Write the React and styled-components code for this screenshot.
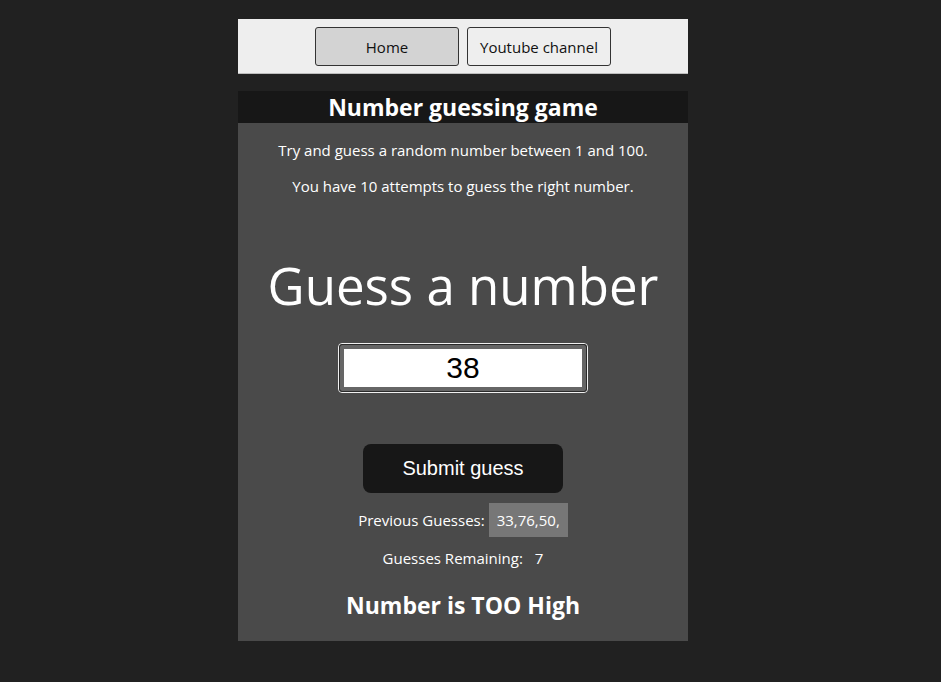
import React from 'react';
import styled, { createGlobalStyle } from 'styled-components';

const GlobalStyle = createGlobalStyle`
  body {
    margin: 0;
    background: #212121;
    font-family: "Open Sans", "Noto Sans", sans-serif;
  }
`;

function App() {
  return (
    <>
      <GlobalStyle />
      <Page>
        <Nav>
          <NavButton active>Home</NavButton>
          <NavButton>Youtube channel</NavButton>
        </Nav>

        <Game>
          <Title>Number guessing game</Title>
          <Info>Try and guess a random number between 1 and 100.</Info>
          <Info>You have 10 attempts to guess the right number.</Info>

          <BigLabel>Guess a number</BigLabel>
          <GuessField>
            <GuessInput type="text" defaultValue="38" />
          </GuessField>

          <SubmitButton>Submit guess</SubmitButton>

          <StatRow>
            Previous Guesses: <Chip>33,76,50,</Chip>
          </StatRow>
          <StatRow>
            Guesses Remaining: <Count>7</Count>
          </StatRow>

          <Result>Number is TOO High</Result>
        </Game>
      </Page>
    </>
  );
}

export default App;

// the reference was taken with a 15px scrollbar, so the column sits a little left of centre
const Page = styled.div`
  width: 450px;
  margin: 19px 0 0 calc((100% - 15px - 450px) / 2);
  display: flex;
  flex-direction: column;
  gap: 17px;
`;

const Nav = styled.nav`
  height: 54px;
  background: #eeeeee;
  border-bottom: 1px solid #bdbdbd;
  display: flex;
  justify-content: center;
  align-items: center;
  gap: 8px;
`;

const NavButton = styled.button`
  width: 144px;
  height: 39px;
  background: ${p => (p.active ? '#d3d3d3' : '#eeeeee')};
  border: 1px solid #333;
  border-radius: 3px;
  font-family: "Open Sans", "Noto Sans", sans-serif;
  font-size: 15px;
  color: #111;
  margin-top: 1px;
`;

const Game = styled.main`
  background: #4a4a4a;
  color: #fff;
  display: flex;
  flex-direction: column;
  align-items: center;
  padding-bottom: 21px;
`;

const Title = styled.h1`
  align-self: stretch;
  margin: 0;
  height: 32px;
  line-height: 33px;
  background: #171717;
  text-align: center;
  font-size: 23px;
  font-weight: 700;
`;

const Info = styled.p`
  margin: 17px 0 0;
  font-size: 15px;
  line-height: 20px;
  & + & {
    margin-top: 16px;
  }
`;

const BigLabel = styled.h2`
  margin: 57px 0 0;
  font-size: 51px;
  font-weight: 400;
  line-height: 64px;
`;

const GuessField = styled.div`
  margin-top: 26px;
  width: 250px;
  height: 50px;
  box-sizing: border-box;
  border: 1px solid #f0f0f0;
  border-radius: 4px;
  padding: 1px;
  display: flex;
`;

const GuessInput = styled.input`
  flex: 1;
  min-width: 0;
  border: 4px solid #666;
  outline: 1px solid #2a2a2a;
  border-radius: 2px;
  background: #fff;
  text-align: center;
  font-family: "Liberation Sans", Arial, sans-serif;
  font-size: 30px;
  color: #000;
  padding: 0;
`;

const SubmitButton = styled.button`
  margin-top: 51px;
  width: 200px;
  height: 49px;
  background: #171717;
  color: #fff;
  border: none;
  border-radius: 8px;
  font-family: "Liberation Sans", Arial, sans-serif;
  font-size: 20px;
`;

const StatRow = styled.div`
  margin-top: 10px;
  font-size: 15px;
  line-height: 34px;
  display: flex;
  align-items: center;
  gap: 4px;
  & + & {
    margin-top: 4px;
  }
`;

const Chip = styled.span`
  background: #777;
  padding: 0 8px;
  line-height: 34px;
`;

const Count = styled.span`
  padding-left: 8px;
`;

const Result = styled.h3`
  margin: 15px 0 0;
  font-size: 23px;
  font-weight: 700;
  line-height: 30px;
`;
